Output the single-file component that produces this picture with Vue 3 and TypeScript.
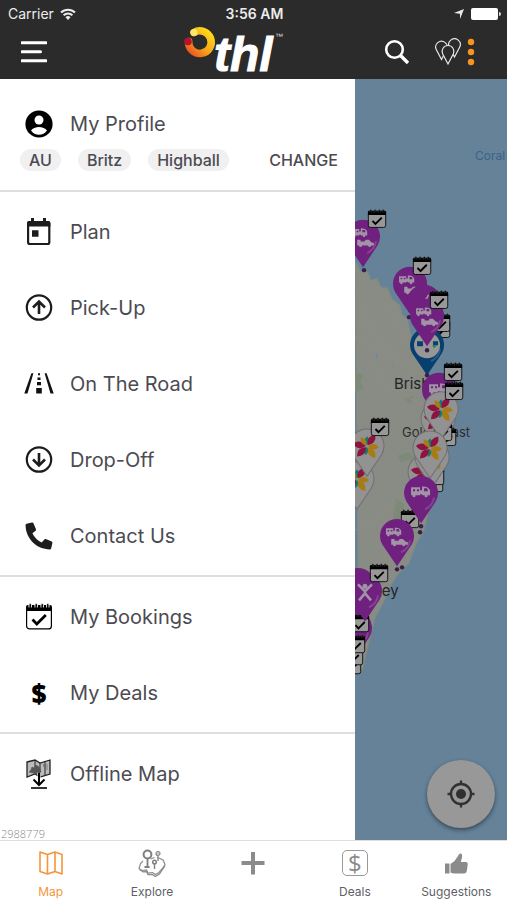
<script setup lang="ts">
import { ref } from 'vue'

type PinKind = 'rental' | 'van' | 'activity' | 'park' | 'flower' | 'plain'

interface MenuItem { icon: string; label: string }
interface Tab { icon: string; label: string }
interface Marker { type: 'pin' | 'badge' | 'dot'; x: number; y: number; kind?: PinKind }
interface Petal { colour: string; angle: number; size: number }

const chips: string[] = ['AU', 'Britz', 'Highball']

const sections: MenuItem[][] = [
  [
    { icon: 'plan', label: 'Plan' },
    { icon: 'pickup', label: 'Pick-Up' },
    { icon: 'road', label: 'On The Road' },
    { icon: 'dropoff', label: 'Drop-Off' },
    { icon: 'phone', label: 'Contact Us' },
  ],
  [
    { icon: 'booking', label: 'My Bookings' },
    { icon: 'dollar', label: 'My Deals' },
  ],
  [{ icon: 'offline', label: 'Offline Map' }],
]

const tabs: Tab[] = [
  { icon: 'map', label: 'Map' },
  { icon: 'explore', label: 'Explore' },
  { icon: 'plus', label: '' },
  { icon: 'deals', label: 'Deals' },
  { icon: 'thumb', label: 'Suggestions' },
]
const activeTab = ref<string>('map')

const petals: Petal[] = [
  { colour: '#137a6c', angle: 0, size: 0.9 },
  { colour: '#8d1440', angle: 35, size: 1.3 },
  { colour: '#a87c14', angle: 95, size: 1.1 },
  { colour: '#a87c14', angle: 145, size: 1.3 },
  { colour: '#137a6c', angle: 190, size: 0.8 },
  { colour: '#8d1440', angle: 225, size: 1.3 },
  { colour: '#8d1440', angle: 280, size: 1.3 },
  { colour: '#a87c14', angle: 325, size: 1 },
]

// Pins are placed by their head centre, badges by their centre.
const markers: Marker[] = [
  { type: 'dot', x: 364, y: 270 },
  { type: 'pin', x: 363, y: 237, kind: 'rental' },
  { type: 'badge', x: 377, y: 218 },
  { type: 'dot', x: 409, y: 317 },
  { type: 'badge', x: 441, y: 328 },
  { type: 'badge', x: 441, y: 322 },
  { type: 'pin', x: 427, y: 345, kind: 'park' },
  { type: 'dot', x: 427, y: 375 },
  { type: 'pin', x: 410, y: 284, kind: 'rental' },
  { type: 'badge', x: 422, y: 265 },
  { type: 'pin', x: 424, y: 302, kind: 'plain' },
  { type: 'pin', x: 427, y: 316, kind: 'rental' },
  { type: 'badge', x: 439, y: 299 },
  { type: 'pin', x: 439, y: 390, kind: 'van' },
  { type: 'badge', x: 453, y: 371 },
  { type: 'pin', x: 438, y: 419, kind: 'flower' },
  { type: 'badge', x: 447, y: 436 },
  { type: 'badge', x: 443, y: 431 },
  { type: 'pin', x: 441, y: 409, kind: 'flower' },
  { type: 'badge', x: 454, y: 390 },
  { type: 'badge', x: 434, y: 482 },
  { type: 'pin', x: 425, y: 472, kind: 'flower' },
  { type: 'badge', x: 435, y: 475 },
  { type: 'pin', x: 432, y: 457, kind: 'flower' },
  { type: 'pin', x: 430, y: 448, kind: 'flower' },
  { type: 'pin', x: 357, y: 479, kind: 'flower' },
  { type: 'pin', x: 367, y: 446, kind: 'flower' },
  { type: 'badge', x: 380, y: 426 },
  { type: 'dot', x: 421, y: 526 },
  { type: 'dot', x: 420, y: 532 },
  { type: 'badge', x: 410, y: 518 },
  { type: 'pin', x: 421, y: 493, kind: 'van' },
  { type: 'dot', x: 397, y: 569 },
  { type: 'dot', x: 402, y: 567 },
  { type: 'pin', x: 397, y: 536, kind: 'rental' },
  { type: 'pin', x: 355, y: 628, kind: 'plain' },
  { type: 'badge', x: 352, y: 664 },
  { type: 'badge', x: 354, y: 655 },
  { type: 'badge', x: 356, y: 643 },
  { type: 'badge', x: 360, y: 622 },
  { type: 'pin', x: 358, y: 585, kind: 'plain' },
  { type: 'pin', x: 365, y: 591, kind: 'activity' },
  { type: 'badge', x: 379, y: 572 },
]

function pinFill(kind?: PinKind): string {
  if (kind === 'park') return '#07406f'
  if (kind === 'flower') return '#929292'
  return '#70207f'
}
</script>

<template>
  <div class="app">
    <svg class="sprite" aria-hidden="true">
      <symbol id="i-profile" viewBox="0 0 30 30">
        <circle cx="15" cy="15" r="13.6" fill="#000" />
        <circle cx="15" cy="11" r="4.5" fill="#fff" />
        <path d="M7 21.6c1.4-2.2 5-3.5 8-3.5s6.600 1.300 8 3.500a9.700 9.700 0 0 1-16 0z" fill="#fff" />
      </symbol>
      <symbol id="i-plan" viewBox="0 0 30 30">
        <rect x="4.100" y="5.200" width="21.200" height="21.800" rx="1.800" fill="none" stroke="#1d1d1d" stroke-width="2.200" />
        <path d="M3 9.500V6q0-2 2-2h19.400q2 0 2 2v3.500zM7 1h3v4H7zM19 1h3v4h-3zM8 13.300h6.500v6.500H8z" fill="#1d1d1d" />
      </symbol>
      <symbol id="i-pickup" viewBox="0 0 30 30">
        <g fill="none" stroke="#1d1d1d" stroke-width="2.200">
          <circle cx="15" cy="14.500" r="12.200" />
          <path d="M15 21V9.500M9 14.500l6-6 6 6" stroke-width="2.600" />
        </g>
      </symbol>
      <symbol id="i-dropoff" viewBox="0 0 30 30">
        <g fill="none" stroke="#1d1d1d" stroke-width="2.200">
          <circle cx="15" cy="14.500" r="12.200" />
          <path d="M15 8v11.500M9 14.500l6 6 6-6" stroke-width="2.600" />
        </g>
      </symbol>
      <symbol id="i-road" viewBox="0 0 30 30">
        <path d="M7.400 4.300h2L3.500 24.500H.3zM20.600 4.300h2l7.100 20.200h-3.200zM14 4.300h2v2h-2zM13.500 8.500h3v2.500h-3zM13 13h4v3.300h-4zM12.200 19h5.600v5.500h-5.600z" fill="#111" />
      </symbol>
      <symbol id="i-phone" viewBox="-30 -30 572 572">
        <path fill="#1d1d1d" d="M497.390 361.800l-112-48a24 24 0 0 0-28 6.900l-49.600 60.600A370.660 370.660 0 0 1 130.600 204.110l60.600-49.600a23.940 23.940 0 0 0 6.900-28l-48-112A24.160 24.160 0 0 0 122.600.610l-104 24A24 24 0 0 0 0 48c0 256.500 207.900 464 464 464a24 24 0 0 0 23.400-18.600l24-104a24.290 24.290 0 0 0-14.010-27.600z" />
      </symbol>
      <symbol id="i-booking" viewBox="0 0 30 30">
        <rect x="2.600" y="4.600" width="24.800" height="22.300" rx="3" fill="var(--paper, #fff)" stroke="#000" stroke-width="1.200" />
        <path d="M2 9V5q0-2 2-2h22q2 0 2 2v4z" fill="#000" />
        <g fill="#000" stroke="var(--ring, #fff)" stroke-width=".9">
          <path d="M5 5.500q-.8-4 1.200-4t1.200 4M11 5.500q-.8-4 1.200-4t1.200 4M17 5.500q-.8-4 1.200-4t1.200 4M22.600 5.500q-.8-4 1.200-4t1.200 4" />
        </g>
        <path d="M8.500 17.500l4.300 4.500 9-9" fill="none" stroke="#000" stroke-width="2.700" />
      </symbol>
      <symbol id="i-offline" viewBox="0 0 30 30">
        <path d="M3 3l8-2 5 3 10-3v14l-10 3-5-3-8 3z" fill="#bbb" stroke="#222" stroke-width="1.300" />
        <path d="M11 1v14M16 4v14M21 2.500v14" stroke="#222" stroke-width="1" fill="none" />
        <path d="M5 13c2-1 2-3 3-5l2 1 2-3 3 2 2 5-4 2zM19 5l1 3M23 5v6" fill="#555" stroke="#555" stroke-width=".6" />
        <path d="M15 13.500V25M9.500 20.500l5.500 5.500 5.500-5.500" fill="none" stroke="#fff" stroke-width="3" />
        <path d="M15 13.500V25M9.500 20.500l5.500 5.500 5.500-5.500" fill="none" stroke="#000" stroke-width="2" />
        <path d="M7 29h16" stroke="#000" stroke-width="1.600" />
      </symbol>

      <symbol id="t-map" viewBox="0 0 28 28">
        <path d="M3 3l7.500 2.500L18 3l7 2.500V25l-7-2.500-7.500 2.500L3 22.500zM10.500 5.500V25M18 3v19.500" fill="none" stroke="#f4963c" stroke-width="1.600" stroke-linejoin="round" />
      </symbol>
      <symbol id="t-explore" viewBox="0 0 28 28">
        <path d="M5 12l-2.500 2.500-1.500 5 3 2 4.500-.5 1.500 3 4.500-.5 3 2 3.500-2 3-3.500 3-4.500-2-4.500-4-2-2-.3M12.500 10l4-1.500" fill="none" stroke="#8b8b8b" stroke-width="1.200" />
        <path d="M1.500 20.500l3.500 2.300 3.500-.3 1.500 3 4.200-.2 3 2.200 4.200-2.400 5.600-8.500" fill="none" stroke="#8b8b8b" stroke-width="1.300" />
        <circle cx="9.500" cy="5.500" r="3.900" fill="none" stroke="#7f7f7f" stroke-width="2" />
        <path d="M9.500 10v8M6.500 18h5" stroke="#7f7f7f" stroke-width="1.800" />
        <circle cx="20" cy="4.500" r="2" fill="#ccc" stroke="#8b8b8b" stroke-width="1.200" />
        <path d="M20 7v5" stroke="#8b8b8b" stroke-width="1.400" />
        <circle cx="16.500" cy="13" r="1.800" fill="none" stroke="#7f7f7f" stroke-width="1.500" />
        <path d="M16.500 15v5" stroke="#7f7f7f" stroke-width="1.400" />
      </symbol>
      <symbol id="t-plus" viewBox="0 0 28 28">
        <path d="M12 3h4v9h9.500v4H16v9.500h-4V16H2.500v-4H12z" fill="#8b8b8b" />
      </symbol>
      <symbol id="t-thumb" viewBox="0 0 28 28">
        <path d="M3 14.500h4.500v10H3z" fill="#8b8b8b" />
        <path d="M8.500 23.500V15q5-3 7.500-8 1-3 2.800-2.500 1.800.7 1.200 4l-1.200 4.500h5q2 0 2 1.900l-1 7.100q-.5 2.500-3 2.500h-9q-2.500 0-4.300-1z" fill="#8b8b8b" />
      </symbol>

      <symbol id="m-van" viewBox="0 0 20 12">
        <path d="M0 1h9v8H0zM11 0q6 0 8 4v5h-8zM9 4h2v4H9z" fill="#a294a6" />
        <path d="M2 3h2v2H2zM6 3h2v2H6zM13 2h3l1 3h-4z" fill="#70207f" />
        <circle cx="3" cy="9.500" r="1.500" fill="#a294a6" />
        <circle cx="15" cy="9.500" r="1.500" fill="#a294a6" />
      </symbol>
      <symbol id="m-car" viewBox="0 0 20 12">
        <path d="M0 2h4v2h5l1-2h4l3 3 3 1v3H0z" fill="#a294a6" />
        <circle cx="4" cy="9" r="1.800" fill="#a294a6" />
        <circle cx="15" cy="9" r="1.800" fill="#a294a6" />
      </symbol>
    </svg>

    <header class="header">
      <div class="status">
        <span class="carrier">
          Carrier
          <svg class="wifi" viewBox="0 0 16 12" aria-hidden="true">
            <g fill="none" stroke="#ececec" stroke-width="2">
              <path d="M1 4.500a10 10 0 0 1 14 0M3.600 7.300a6.300 6.300 0 0 1 8.800 0" />
            </g>
            <path d="M8 12L5.500 9.300a3.600 3.600 0 0 1 5 0z" fill="#ececec" />
          </svg>
        </span>
        <span class="clock">3:56 AM</span>
        <span class="power">
          <svg class="arrow" viewBox="0 0 12 12" aria-hidden="true"><path d="M11 1L7 11V5.800L1 5z" fill="#ececec" /></svg>
          <svg class="battery" viewBox="0 0 30 12" aria-hidden="true">
            <rect width="27" height="12" rx="2" fill="#fff" /><path d="M28 4q2 0 2 2t-2 2z" fill="#ddd" />
          </svg>
        </span>
      </div>
      <div class="toolbar">
        <button class="tool menu-button" type="button" aria-label="Menu">
          <svg viewBox="0 0 26 22"><path d="M1 1.800h24M1 10.800h18.500M1 19.800h24" stroke="#fff" stroke-width="3" stroke-linecap="round" /></svg>
        </button>
        <svg class="logo" viewBox="0 0 102 52" role="img" aria-label="thl">
          <defs>
            <linearGradient id="ring" x1="0" y1="1" x2="1" y2="0">
              <stop offset="0" stop-color="#ea5020" /><stop offset=".45" stop-color="#f8a21b" /><stop offset="1" stop-color="#ffe01a" />
            </linearGradient>
          </defs>
          <path d="M11 6.500A11.300 11.300 0 1 1 5.600 15.500" fill="none" stroke="url(#ring)" stroke-width="7.600" stroke-linecap="round" />
          <circle cx="5" cy="15.500" r="3.800" fill="#b5122e" />
          <circle cx="11" cy="6.500" r="3.600" fill="#fbe96a" />
          <text class="logo-text" x="31" y="45">thl</text>
          <text class="logo-mark" x="92" y="13">™</text>
        </svg>
        <div class="tools">
          <button class="tool search" type="button" aria-label="Search">
            <svg viewBox="0 0 26 26"><circle cx="10.500" cy="10.500" r="8.300" fill="none" stroke="#fff" stroke-width="2.600" /><path d="M16.500 16.500l7.500 7.500" stroke="#fff" stroke-width="3.400" /></svg>
          </button>
          <button class="tool pins" type="button" aria-label="Places">
            <svg viewBox="0 0 28 28">
              <g fill="#2b2b2b" stroke="#e8e8e8" stroke-width="1.200">
                <path d="M7.500 21.500L2.500 12A5.800 5.800 0 1 1 12.500 12z" />
                <path d="M20.500 19l-5-9.500a5.800 5.800 0 1 1 10 0z" />
                <path d="M14 26L8.700 16a5.900 5.900 0 1 1 10.600 0z" />
              </g>
            </svg>
          </button>
          <button class="tool more" type="button" aria-label="More">
            <svg viewBox="0 0 8 28"><g fill="#f7941e"><circle cx="4" cy="4" r="3.200" /><circle cx="4" cy="14" r="3.200" /><circle cx="4" cy="24" r="3.200" /></g></svg>
          </button>
        </div>
      </div>
    </header>

    <main class="content">
      <nav class="drawer" aria-label="Main menu">
        <section class="profile">
          <a class="profile-link" href="#profile">
            <svg class="icon"><use href="#i-profile" /></svg>
            <span>My Profile</span>
          </a>
          <div class="vehicle">
            <span v-for="chip in chips" :key="chip" class="chip">{{ chip }}</span>
            <button class="change" type="button">CHANGE</button>
          </div>
        </section>
        <ul v-for="(items, index) in sections" :key="index" class="group">
          <li v-for="item in items" :key="item.icon">
            <a class="item" :href="'#' + item.icon">
              <span v-if="item.icon === 'dollar'" class="icon dollar" aria-hidden="true">$</span>
              <svg v-else class="icon" aria-hidden="true"><use :href="'#i-' + item.icon" /></svg>
              <span>{{ item.label }}</span>
            </a>
          </li>
        </ul>
        <small class="build">2988779</small>
      </nav>

      <section class="map" aria-label="Map">
        <svg class="canvas" viewBox="355 79 152 761" preserveAspectRatio="xMinYMin slice">
          <rect x="355" y="79" width="600" height="761" fill="#658299" />
          <path class="land" d="M355 260l5 10 8 2 3 8 6-2 4 9 7 1 4 11 8 6 2 9 6 5 2 12 4 14 14 30 8 15 4 20 6 20-2 20-4 25-9 25-7 30-8 14-7 19-12 12-6 10-8 18-8 15-5 20-7 30-4 5z" />
          <path class="green" d="M355 372l8 3-3 6 4 8-9 3zM396 498l8 6-2 16-7 10-2-12zM372 572l12-8-5 12-9 4zM398 455l12-3 4 6-13 4zM404 398l10-2-4 8z" />
          <g class="roads">
            <path d="M355 300q14 26 28 42t44 38M355 336l30 18 42 22M366 355l20 30 40 22M355 530q30-8 50-40t20-60M386 300q14 30 38 76" />
          </g>
          <path class="lakes" d="M376 352l2 4-2 3zM362 366l2 1-1 3zM392 364l2 2-2 1z" />
          <text class="sea-label" x="475" y="160">Coral</text>
          <text class="city" x="394" y="389">Brisbane</text>
          <text class="town" x="402" y="437">Gold Coast</text>
          <text class="city" x="346" y="596">Sydney</text>

          <template v-for="(m, i) in markers" :key="i">
            <circle v-if="m.type === 'dot'" :cx="m.x" :cy="m.y" r="2.200" fill="#35204a" />
            <svg v-else-if="m.type === 'badge'" class="badge" :x="m.x - 10.500" :y="m.y - 10" width="21" height="22">
              <use href="#i-booking" />
            </svg>
            <g v-else :transform="`translate(${m.x} ${m.y})`">
              <path d="M0 30L-14.500 8.500A17 17 0 1 1 14.500 8.500z" :fill="pinFill(m.kind)" :class="{ pale: m.kind === 'flower' }" />
              <path v-if="m.kind !== 'flower'" d="M4 16q8-4 9-12" fill="none" stroke="#fff" stroke-opacity=".15" stroke-width="2" />
              <template v-if="m.kind === 'rental'">
                <use href="#m-van" x="-11" y="-9" width="16" height="10" />
                <use href="#m-car" x="-6" y="1" width="17" height="10" />
              </template>
              <use v-else-if="m.kind === 'van'" href="#m-van" x="-10" y="-7" width="20" height="12" />
              <template v-else-if="m.kind === 'park'">
                <circle r="13" fill="#979797" />
                <path d="M-10-4h6v5h-6zM6-4h5v4H6z" fill="#07406f" />
                <path d="M5 0h5l-3 3z" fill="#1c8a43" />
                <circle cy="5" r="2.200" fill="#35204a" />
              </template>
              <g v-else-if="m.kind === 'activity'" fill="none" stroke="#a294a6" stroke-width="2.600">
                <path d="M-7-7L0 0l7-7M0 0v3M-6 9l6-7 6 7" /><circle cy="-5" r="1.200" />
              </g>
              <template v-else-if="m.kind === 'flower'">
                <path
                  v-for="(petal, p) in petals" :key="p" :fill="petal.colour"
                  d="M0-1q-5-5 0-10q5 5 0 10z" :transform="`rotate(${petal.angle}) scale(${petal.size})`"
                />
              </template>
              <path v-else d="M-4 0q6-3 8-8l1 1q-2 7-8 9z" fill="#a294a6" />
            </g>
          </template>
        </svg>
        <button class="locate" type="button" aria-label="Locate me">
          <svg viewBox="0 0 28 28"><g fill="none" stroke="#303030" stroke-width="2.300"><circle cx="14" cy="14" r="10" /><path d="M14 .5V5M14 23v4.500M.5 14H5M23 14h4.500" /></g><circle cx="14" cy="14" r="5" fill="#303030" /></svg>
        </button>
      </section>
    </main>

    <footer class="tabs">
      <button
        v-for="tab in tabs" :key="tab.icon" type="button" class="tab"
        :class="{ active: activeTab === tab.icon }" :aria-label="tab.label || 'Add'" @click="activeTab = tab.icon"
      >
        <span v-if="tab.icon === 'deals'" class="tab-icon deal" aria-hidden="true">$</span>
        <svg v-else class="tab-icon" aria-hidden="true"><use :href="'#t-' + tab.icon" /></svg>
        <span>{{ tab.label }}</span>
      </button>
    </footer>
  </div>
</template>

<style>
body {
  margin: 0;
}
</style>

<style scoped>
.app {
  display: flex;
  flex-direction: column;
  min-height: 100vh;
  background: #fff;
  color: #4b4b52;
  font-family: Inter, Roboto, sans-serif;
}
.sprite {
  position: absolute;
  width: 0;
  height: 0;
}
button {
  margin: 0;
  padding: 0;
  border: 0;
  background: none;
  color: inherit;
  font: inherit;
}
a {
  color: inherit;
  text-decoration: none;
}

.header {
  padding-bottom: 1px;
  background: #2b2b2b;
  color: #ececec;
}
.status {
  display: grid;
  grid-template-columns: 1fr auto 1fr;
  align-items: center;
  height: 25px;
  padding: 1px 6px 0 8px;
  font-size: 14px;
}
.carrier,
.power {
  display: flex;
  align-items: center;
  gap: 6px;
}
.power {
  justify-content: flex-end;
}
.wifi {
  width: 16px;
  height: 12px;
}
.clock {
  font-weight: 600;
}
.arrow {
  width: 12px;
  height: 12px;
}
.battery {
  width: 30px;
  height: 12px;
}
.toolbar {
  display: grid;
  grid-template-columns: 36% auto 1fr;
  align-items: center;
  height: 52px;
}
.tool {
  display: flex;
}
.menu-button {
  width: 26px;
  margin-left: 21px;
}
.menu-button svg,
.search svg,
.pins svg,
.more svg {
  display: block;
  width: 100%;
}
.logo {
  width: 102px;
  height: 52px;
  overflow: visible;
}
.logo-text {
  fill: #fff;
  font: italic 700 48px 'Liberation Sans', sans-serif;
  stroke: #fff;
  stroke-width: 1;
}
.logo-mark {
  fill: #ddd;
  font: 8px 'Liberation Sans', sans-serif;
}
.tools {
  display: flex;
  align-items: center;
  justify-content: flex-end;
  padding-right: 32px;
}
.search {
  width: 26px;
  margin-right: 24px;
}
.pins {
  width: 28px;
  margin-right: 5px;
}
.more {
  width: 8px;
}

.content {
  display: flex;
  flex: 1;
}
.drawer {
  display: flex;
  flex: 0 0 70%;
  flex-direction: column;
}
.profile {
  padding: 27px 17px 12px 20px;
  border-bottom: 2px solid #dedede;
}
.profile-link,
.item {
  display: flex;
  align-items: center;
  gap: 16px;
  font-size: 20px;
}
.profile-link {
  height: 36px;
  margin-left: 4px;
}
.icon {
  flex: none;
  width: 30px;
  height: 30px;
}
.dollar {
  color: #000;
  font: 800 26px/30px 'Open Sans', sans-serif;
  text-align: center;
}
.vehicle {
  display: flex;
  align-items: center;
  gap: 17px;
  height: 36px;
  font-size: 16px;
  font-weight: 500;
}
.chip {
  padding: 0 9px;
  border-radius: 11px;
  background: #f0f0f1;
  line-height: 22px;
}
.change {
  margin-left: auto;
}
.group {
  margin: 0;
  padding: 2px 0 1px;
  border-bottom: 2px solid #dedede;
  list-style: none;
}
.group:last-of-type {
  border-bottom: 0;
}
.item {
  height: 76px;
  padding-left: 24px;
}
.build {
  margin-top: auto;
  padding-left: 1px;
  color: #8a8a8a;
  font: 300 11px/12px 'Open Sans', sans-serif;
}

.map {
  position: relative;
  flex: 1;
  overflow: hidden;
  background: #658299;
}
.canvas {
  position: absolute;
  width: 100%;
  height: 100%;
}
.land {
  fill: #888c84;
  stroke: #7c8a80;
}
.green {
  fill: #7d8a78;
}
.roads {
  fill: none;
  stroke: #8e8d83;
  stroke-width: 1;
}
.lakes {
  fill: #6d8ba0;
}
.sea-label {
  fill: #3b6286;
  font-size: 12px;
}
.city {
  fill: #242424;
  font-size: 15px;
}
.town {
  fill: #2e2e2e;
  font-size: 13px;
}
.badge {
  --paper: #989898;
  --ring: #444;
}
.pale {
  stroke: #6f6f6f;
}
.locate {
  position: absolute;
  right: 12px;
  bottom: 12px;
  display: flex;
  align-items: center;
  justify-content: center;
  width: 68px;
  height: 68px;
  border-radius: 50%;
  background: #989898;
  box-shadow: 0 2px 4px rgb(0 0 0 / 45%);
}
.locate svg {
  width: 28px;
  height: 28px;
}

.tabs {
  display: grid;
  grid-template-columns: repeat(5, 1fr);
  height: 59px;
  border-top: 1px solid #dedede;
}
.tab {
  display: flex;
  flex-direction: column;
  align-items: center;
  gap: 7px;
  padding-top: 8px;
  color: #5f5f66;
  font-size: 12px;
  line-height: 16px;
}
.tab.active {
  color: #f4963c;
}
.tab-icon {
  width: 28px;
  height: 28px;
}
.deal {
  box-sizing: border-box;
  width: 26px;
  height: 26px;
  margin: 1px;
  border: 1px solid #999;
  border-radius: 5px;
  color: #8b8b8b;
  font: 400 24px/24px 'Open Sans', sans-serif;
  text-align: center;
}
</style>
